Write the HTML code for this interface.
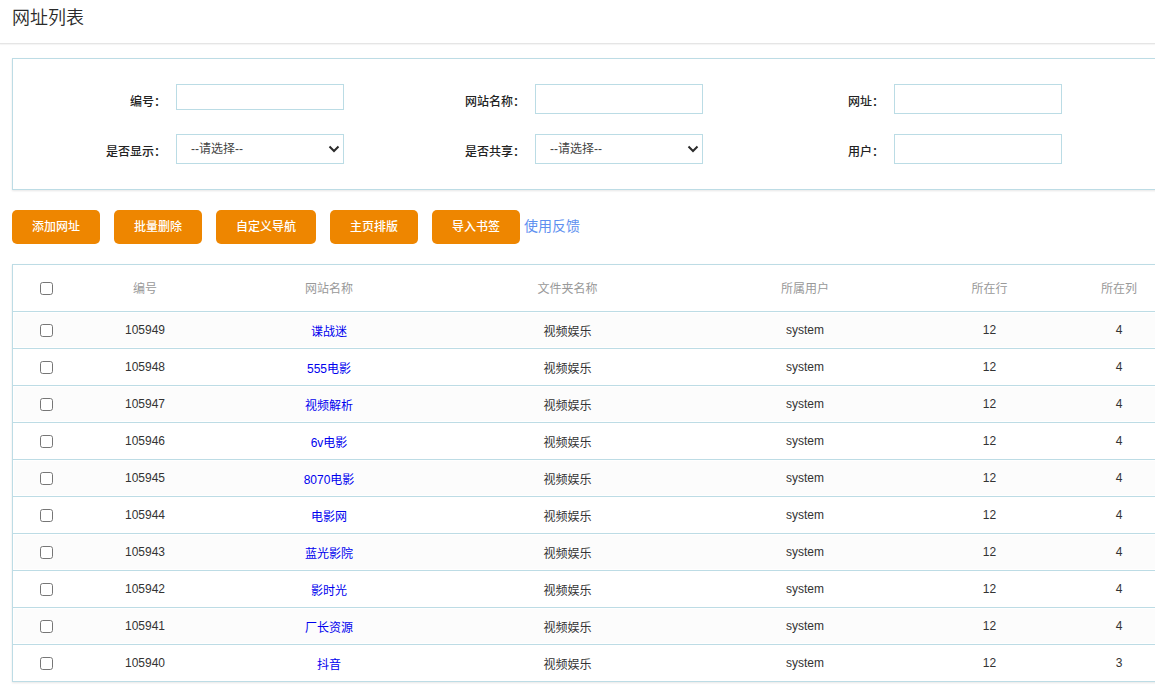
<!DOCTYPE html>
<html lang="zh-CN">
<head>
<meta charset="utf-8">
<title>网址列表</title>
<style>
*{box-sizing:border-box;margin:0;padding:0}
html,body{width:1155px;height:698px;overflow:hidden;background:#fff}
body{font-family:"Liberation Sans","Noto Sans CJK SC",sans-serif;font-size:12px;color:#333;position:relative}
.title{position:absolute;left:12px;top:0;height:43px;line-height:36px;font-size:18px;color:#2a2a2a;font-weight:350}
.hr{position:absolute;left:0;top:43px;width:1155px;height:1px;background:#e5e5e5;box-shadow:0 1px 1px rgba(0,0,0,.05)}
.search{position:absolute;left:12px;top:58px;width:1200px;height:132px;border:1px solid #bddce5;background:#fff;box-shadow:0 1px 2px rgba(0,0,0,.1)}
.lbl{position:absolute;width:140px;text-align:right;font-weight:500;font-size:12px;line-height:30px;color:#222}
.inp{position:absolute;width:168px;height:30px;border:1px solid #bbdce5;background:#fff}
.sel{position:absolute;width:168px;height:30px;border:1px solid #bbdce5;background:#fff;font-size:12px;line-height:29px;padding-left:14px;color:#444}
.sel svg{position:absolute;right:3px;top:10px}
.btn{position:absolute;top:210px;height:34px;width:88px;border-radius:5px;background:#ee8600;color:#fff;font-weight:500;font-size:12px;line-height:34px;text-align:center}
.fb{position:absolute;left:524px;top:210px;line-height:32px;font-size:14px;color:#5e90f0}
table{position:absolute;left:12px;top:264px;border-collapse:separate;border-spacing:0;table-layout:fixed;width:1170px;border:1px solid #bddce5;border-bottom:none;box-shadow:0 1px 2px rgba(0,0,0,.1)}
th{height:47px;padding-bottom:2px;font-weight:400;color:#999;font-size:12px;border-bottom:1px solid #bddce5;text-align:center;background:#fff}
th:first-child{padding-bottom:0}
td{height:37px;font-size:12px;color:#333;border-bottom:1px solid #bddce5;text-align:center;background:#fff}
tbody tr:nth-child(odd) td{background:#fcfcfc;box-shadow:inset 0 1px 0 #fff,inset 0 -1px 0 #fff}
tbody tr:nth-child(odd) td:first-child{box-shadow:inset 0 1px 0 #fff,inset 0 -1px 0 #fff,inset 1px 0 0 #fff}
td a{color:#0000ee;text-decoration:none}
.cb{display:inline-block;vertical-align:middle}
</style>
</head>
<body>
<div class="title">网址列表</div>
<div class="hr"></div>

<div class="search">
  <div class="lbl" style="left:13px;top:28px">编号：</div>
  <div class="inp" style="left:163px;top:25px;height:26px"></div>
  <div class="lbl" style="left:372px;top:28px">网站名称：</div>
  <div class="inp" style="left:522px;top:25px"></div>
  <div class="lbl" style="left:731px;top:28px">网址：</div>
  <div class="inp" style="left:881px;top:25px"></div>

  <div class="lbl" style="left:13px;top:78px">是否显示：</div>
  <div class="sel" style="left:163px;top:75px">--请选择--<svg width="12" height="8" viewBox="0 0 12 8"><path d="M1.5 1.5 L6 6 L10.5 1.5" fill="none" stroke="#2b2b2b" stroke-width="2"/></svg></div>
  <div class="lbl" style="left:372px;top:78px">是否共享：</div>
  <div class="sel" style="left:522px;top:75px">--请选择--<svg width="12" height="8" viewBox="0 0 12 8"><path d="M1.5 1.5 L6 6 L10.5 1.5" fill="none" stroke="#2b2b2b" stroke-width="2"/></svg></div>
  <div class="lbl" style="left:731px;top:78px">用户：</div>
  <div class="inp" style="left:881px;top:75px"></div>
</div>

<div class="btn" style="left:12px">添加网址</div>
<div class="btn" style="left:114px">批量删除</div>
<div class="btn" style="left:216px;width:100px">自定义导航</div>
<div class="btn" style="left:330px">主页排版</div>
<div class="btn" style="left:432px">导入书签</div>
<div class="fb">使用反馈</div>

<table>
<colgroup><col style="width:67px"><col style="width:130px"><col style="width:238px"><col style="width:239px"><col style="width:236px"><col style="width:133px"><col style="width:126px"></colgroup>
<thead><tr><th><svg class="cb" width="13" height="13" viewBox="0 0 13 13"><rect x=".5" y=".5" width="12" height="12" rx="2.2" fill="#fff" stroke="#767676"/></svg></th><th>编号</th><th>网站名称</th><th>文件夹名称</th><th>所属用户</th><th>所在行</th><th>所在列</th></tr></thead>
<tbody>
<tr><td><svg class="cb" width="13" height="13" viewBox="0 0 13 13"><rect x=".5" y=".5" width="12" height="12" rx="2.2" fill="#fff" stroke="#767676"/></svg></td><td>105949</td><td><a>谍战迷</a></td><td>视频娱乐</td><td>system</td><td>12</td><td>4</td></tr>
<tr><td><svg class="cb" width="13" height="13" viewBox="0 0 13 13"><rect x=".5" y=".5" width="12" height="12" rx="2.2" fill="#fff" stroke="#767676"/></svg></td><td>105948</td><td><a>555电影</a></td><td>视频娱乐</td><td>system</td><td>12</td><td>4</td></tr>
<tr><td><svg class="cb" width="13" height="13" viewBox="0 0 13 13"><rect x=".5" y=".5" width="12" height="12" rx="2.2" fill="#fff" stroke="#767676"/></svg></td><td>105947</td><td><a>视频解析</a></td><td>视频娱乐</td><td>system</td><td>12</td><td>4</td></tr>
<tr><td><svg class="cb" width="13" height="13" viewBox="0 0 13 13"><rect x=".5" y=".5" width="12" height="12" rx="2.2" fill="#fff" stroke="#767676"/></svg></td><td>105946</td><td><a>6v电影</a></td><td>视频娱乐</td><td>system</td><td>12</td><td>4</td></tr>
<tr><td><svg class="cb" width="13" height="13" viewBox="0 0 13 13"><rect x=".5" y=".5" width="12" height="12" rx="2.2" fill="#fff" stroke="#767676"/></svg></td><td>105945</td><td><a>8070电影</a></td><td>视频娱乐</td><td>system</td><td>12</td><td>4</td></tr>
<tr><td><svg class="cb" width="13" height="13" viewBox="0 0 13 13"><rect x=".5" y=".5" width="12" height="12" rx="2.2" fill="#fff" stroke="#767676"/></svg></td><td>105944</td><td><a>电影网</a></td><td>视频娱乐</td><td>system</td><td>12</td><td>4</td></tr>
<tr><td><svg class="cb" width="13" height="13" viewBox="0 0 13 13"><rect x=".5" y=".5" width="12" height="12" rx="2.2" fill="#fff" stroke="#767676"/></svg></td><td>105943</td><td><a>蓝光影院</a></td><td>视频娱乐</td><td>system</td><td>12</td><td>4</td></tr>
<tr><td><svg class="cb" width="13" height="13" viewBox="0 0 13 13"><rect x=".5" y=".5" width="12" height="12" rx="2.2" fill="#fff" stroke="#767676"/></svg></td><td>105942</td><td><a>影时光</a></td><td>视频娱乐</td><td>system</td><td>12</td><td>4</td></tr>
<tr><td><svg class="cb" width="13" height="13" viewBox="0 0 13 13"><rect x=".5" y=".5" width="12" height="12" rx="2.2" fill="#fff" stroke="#767676"/></svg></td><td>105941</td><td><a>厂长资源</a></td><td>视频娱乐</td><td>system</td><td>12</td><td>4</td></tr>
<tr><td><svg class="cb" width="13" height="13" viewBox="0 0 13 13"><rect x=".5" y=".5" width="12" height="12" rx="2.2" fill="#fff" stroke="#767676"/></svg></td><td>105940</td><td><a>抖音</a></td><td>视频娱乐</td><td>system</td><td>12</td><td>3</td></tr>
</tbody>
</table>
</body>
</html>
